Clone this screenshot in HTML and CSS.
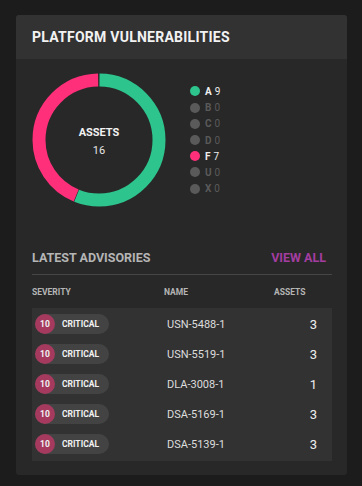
FILE: index.html
```html
<!DOCTYPE html>
<html lang="en">
<head>
    <meta charset="UTF-8">
    <meta name="viewport" content="width=device-width, initial-scale=1.0">
    <title>Platform Vulnerabilities</title>
    <link rel="stylesheet" href="styles.css">
</head>
<body>
    <div class="card">
        <header class="card-header">
            <h1>PLATFORM VULNERABILITIES</h1>
        </header>
        <div class="card-body">
            <section class="summary">
                <div class="donut">
                    <svg width="134" height="134" viewBox="0 0 134 134">
                        <g transform="rotate(-90 67 67)">
                            <circle cx="67" cy="67" r="60" fill="none" stroke="#2dc48d" stroke-width="13"
                                stroke-dasharray="210.6 166.4" stroke-dashoffset="-0.5"></circle>
                            <circle cx="67" cy="67" r="60" fill="none" stroke="#ff2f7a" stroke-width="13"
                                stroke-dasharray="163.9 213.1" stroke-dashoffset="-211.6"></circle>
                        </g>
                    </svg>
                    <div class="donut-label">
                        <strong>ASSETS</strong>
                        <span>16</span>
                    </div>
                </div>
                <ul class="legend">
                    <li class="on"><i class="dot green"></i><b>A</b> 9</li>
                    <li><i class="dot"></i><b>B</b> 0</li>
                    <li><i class="dot"></i><b>C</b> 0</li>
                    <li><i class="dot"></i><b>D</b> 0</li>
                    <li class="on"><i class="dot pink"></i><b>F</b> 7</li>
                    <li><i class="dot"></i><b>U</b> 0</li>
                    <li><i class="dot"></i><b>X</b> 0</li>
                </ul>
            </section>

            <section class="advisories">
                <div class="adv-head">
                    <h2>LATEST ADVISORIES</h2>
                    <a href="#" class="view-all">VIEW ALL</a>
                </div>
                <div class="cols">
                    <span class="col-sev">SEVERITY</span>
                    <span class="col-name">NAME</span>
                    <span class="col-assets">ASSETS</span>
                </div>
                <div class="rows">
                    <div class="row">
                        <span class="col-sev"><span class="badge"><i>10</i>CRITICAL</span></span>
                        <span class="col-name">USN-5488-1</span>
                        <span class="col-assets">3</span>
                    </div>
                    <div class="row">
                        <span class="col-sev"><span class="badge"><i>10</i>CRITICAL</span></span>
                        <span class="col-name">USN-5519-1</span>
                        <span class="col-assets">3</span>
                    </div>
                    <div class="row">
                        <span class="col-sev"><span class="badge"><i>10</i>CRITICAL</span></span>
                        <span class="col-name">DLA-3008-1</span>
                        <span class="col-assets">1</span>
                    </div>
                    <div class="row">
                        <span class="col-sev"><span class="badge"><i>10</i>CRITICAL</span></span>
                        <span class="col-name">DSA-5169-1</span>
                        <span class="col-assets">3</span>
                    </div>
                    <div class="row">
                        <span class="col-sev"><span class="badge"><i>10</i>CRITICAL</span></span>
                        <span class="col-name">DSA-5139-1</span>
                        <span class="col-assets">3</span>
                    </div>
                </div>
            </section>
        </div>
    </div>
</body>
</html>
```

FILE: styles.css
```css
body {
    margin: 0;
    background: #1c1c1c;
    font-family: Roboto, "Liberation Sans", sans-serif;
    color: #ddd;
}

.card {
    width: 331px;
    margin: 15px 0 0 16px;
    background: #282828;
    border-radius: 3px;
    overflow: hidden;
}

.card-header {
    background: #323232;
    height: 44px;
    padding: 0 16px;
    display: flex;
    align-items: center;
}

.card-header h1 {
    margin: 0;
    font-size: 14px;
    font-weight: 700;
    color: #f2f2f2;
    letter-spacing: 0.25px;
}

.card-body {
    padding: 14px 15px 14px 16px;
}

.summary {
    display: flex;
    align-items: center;
}

.donut {
    position: relative;
    width: 134px;
    height: 134px;
}

.donut svg {
    display: block;
}

.donut-label {
    position: absolute;
    inset: 0;
    display: flex;
    flex-direction: column;
    align-items: center;
    justify-content: center;
    padding-top: 2px;
}

.donut-label strong {
    font-size: 11px;
    color: #f2f2f2;
}

.donut-label span {
    font-size: 11px;
    margin-top: 5px;
    color: #e6e6e6;
}

.legend {
    list-style: none;
    margin: 0 0 0 24px;
    padding: 0;
}

.legend li {
    display: flex;
    align-items: center;
    height: 16.2px;
    font-size: 10px;
    color: #5a5a5a;
}

.legend li b {
    margin-right: 3px;
}

.legend li.on {
    color: #eee;
}

.dot {
    width: 10px;
    height: 10px;
    border-radius: 50%;
    background: #5a5a5a;
    margin-right: 5px;
}

.dot.green {
    background: #2dc48d;
}

.dot.pink {
    background: #ff2f7a;
}

.advisories {
    margin-top: 43px;
}

.adv-head {
    display: flex;
    justify-content: space-between;
    align-items: center;
    padding: 0 6px 9px 0;
    border-bottom: 1px solid #464646;
}

.adv-head h2 {
    margin: 0;
    font-size: 12.5px;
    font-weight: 700;
    color: #b5b5b5;
}

.view-all {
    font-size: 12.5px;
    font-weight: 700;
    color: #a33da0;
    text-decoration: none;
}

.cols, .row {
    display: flex;
    align-items: center;
}

.cols {
    height: 33px;
    font-size: 8.5px;
    font-weight: 700;
    color: #b5b5b5;
}

.col-sev {
    width: 132px;
}

.col-name {
    width: 110px;
}

.cols .col-assets {
    width: 40px;
}

.rows {
    background: #323232;
    padding: 1px 0 2px;
}

.row {
    height: 30px;
    font-size: 11px;
}

.row .col-sev {
    width: 132px;
    padding-left: 3px;
}

.row .col-name {
    color: #ddd;
}

.row .col-assets {
    width: 40px;
    text-align: right;
    font-size: 13px;
    color: #eee;
}

.badge {
    display: inline-flex;
    align-items: center;
    background: #434343;
    border-radius: 10px;
    height: 20px;
    width: 74px;
    font-size: 8.5px;
    font-weight: 700;
    color: #f2f2f2;
}

.badge i {
    font-style: normal;
    width: 20px;
    height: 20px;
    border-radius: 50%;
    background: #a53a5e;
    display: flex;
    align-items: center;
    justify-content: center;
    margin-right: 7px;
}
```
